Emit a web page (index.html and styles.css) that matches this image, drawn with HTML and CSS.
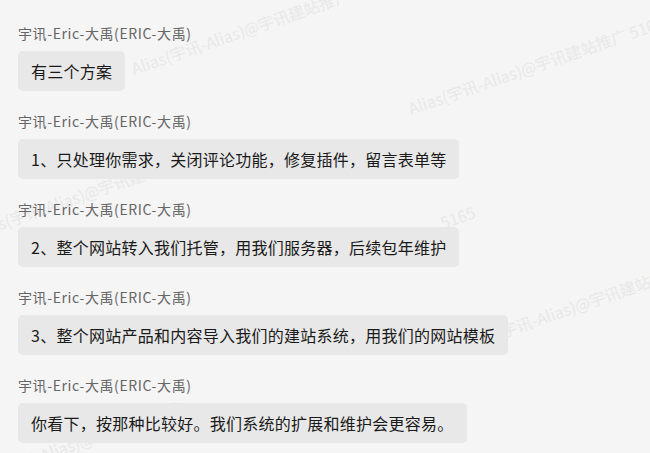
FILE: index.html
```html
<!DOCTYPE html>
<html lang="zh-CN">
<head>
    <meta charset="UTF-8">
    <meta name="viewport" content="width=device-width, initial-scale=1.0">
    <title>聊天记录</title>
    <link rel="stylesheet" href="styles.css">
</head>
<body>
    <div class="watermarks">
        <span class="wm wm-a">Alias(宇讯-Alias)@宇讯建站推广 5165</span>
        <span class="wm wm-b">Alias(宇讯-Alias)@宇讯建站推广 5165</span>
        <span class="wm wm-c">Alias(宇讯-Alias)@宇讯建站推广 5165</span>
        <span class="wm wm-d">5165</span>
        <span class="wm wm-e">Alias(宇讯-Alias)@宇讯建站推广 5165</span>
        <span class="wm wm-f">Alias(宇讯-Alias)@宇讯建站推广</span>
    </div>

    <div class="chat">
        <div class="msg">
            <div class="name">宇讯-Eric-大禹(ERIC-大禹)</div>
            <div class="bubble">有三个方案</div>
        </div>
        <div class="msg">
            <div class="name">宇讯-Eric-大禹(ERIC-大禹)</div>
            <div class="bubble">1、只处理你需求，关闭评论功能，修复插件，留言表单等</div>
        </div>
        <div class="msg">
            <div class="name">宇讯-Eric-大禹(ERIC-大禹)</div>
            <div class="bubble">2、整个网站转入我们托管，用我们服务器，后续包年维护</div>
        </div>
        <div class="msg">
            <div class="name">宇讯-Eric-大禹(ERIC-大禹)</div>
            <div class="bubble">3、整个网站产品和内容导入我们的建站系统，用我们的网站模板</div>
        </div>
        <div class="msg">
            <div class="name">宇讯-Eric-大禹(ERIC-大禹)</div>
            <div class="bubble">你看下，按那种比较好。我们系统的扩展和维护会更容易。</div>
        </div>
    </div>
</body>
</html>
```

FILE: styles.css
```css
body {
    margin: 0;
    background-color: #f5f5f5;
    font-family: 'Noto Sans CJK SC', 'Noto Sans', sans-serif;
    color: #1a1a1a;
    overflow: hidden;
}
/* faint diagonal watermark behind the chat */
.watermarks {
    position: absolute;
    inset: 0;
    overflow: hidden;
    pointer-events: none;
}
.wm {
    position: absolute;
    font-size: 16px;
    line-height: 20px;
    white-space: nowrap;
    color: #e8e8e8;
    transform: rotate(-19deg);
    transform-origin: left bottom;
}
.wm-a { left: 135px; top: 58px; }
.wm-b { left: 412px; top: 98px; }
.wm-c { left: -25px; top: 222px; }
.wm-d { left: 444px; top: 212px; }
.wm-e { left: 466px; top: 334px; }
.wm-f { left: -30px; top: 470px; }
.chat {
    position: relative;
    display: flex;
    flex-direction: column;
    align-items: flex-start;
    padding: 23px 18px 0;
}
.msg {
    display: flex;
    flex-direction: column;
    align-items: flex-start;
    gap: 8px;
    margin-bottom: 20px;
}
.msg:last-child {
    margin-bottom: 0;
}
.name {
    font-size: 14px;
    line-height: 20px;
    letter-spacing: 0.6px;
    color: #666666;
}
.bubble {
    font-size: 16px;
    line-height: 24px;
    letter-spacing: 0.25px;
    padding: 8px 13px;
    background-color: #e8e8e8;
    border-radius: 5px;
}
```
